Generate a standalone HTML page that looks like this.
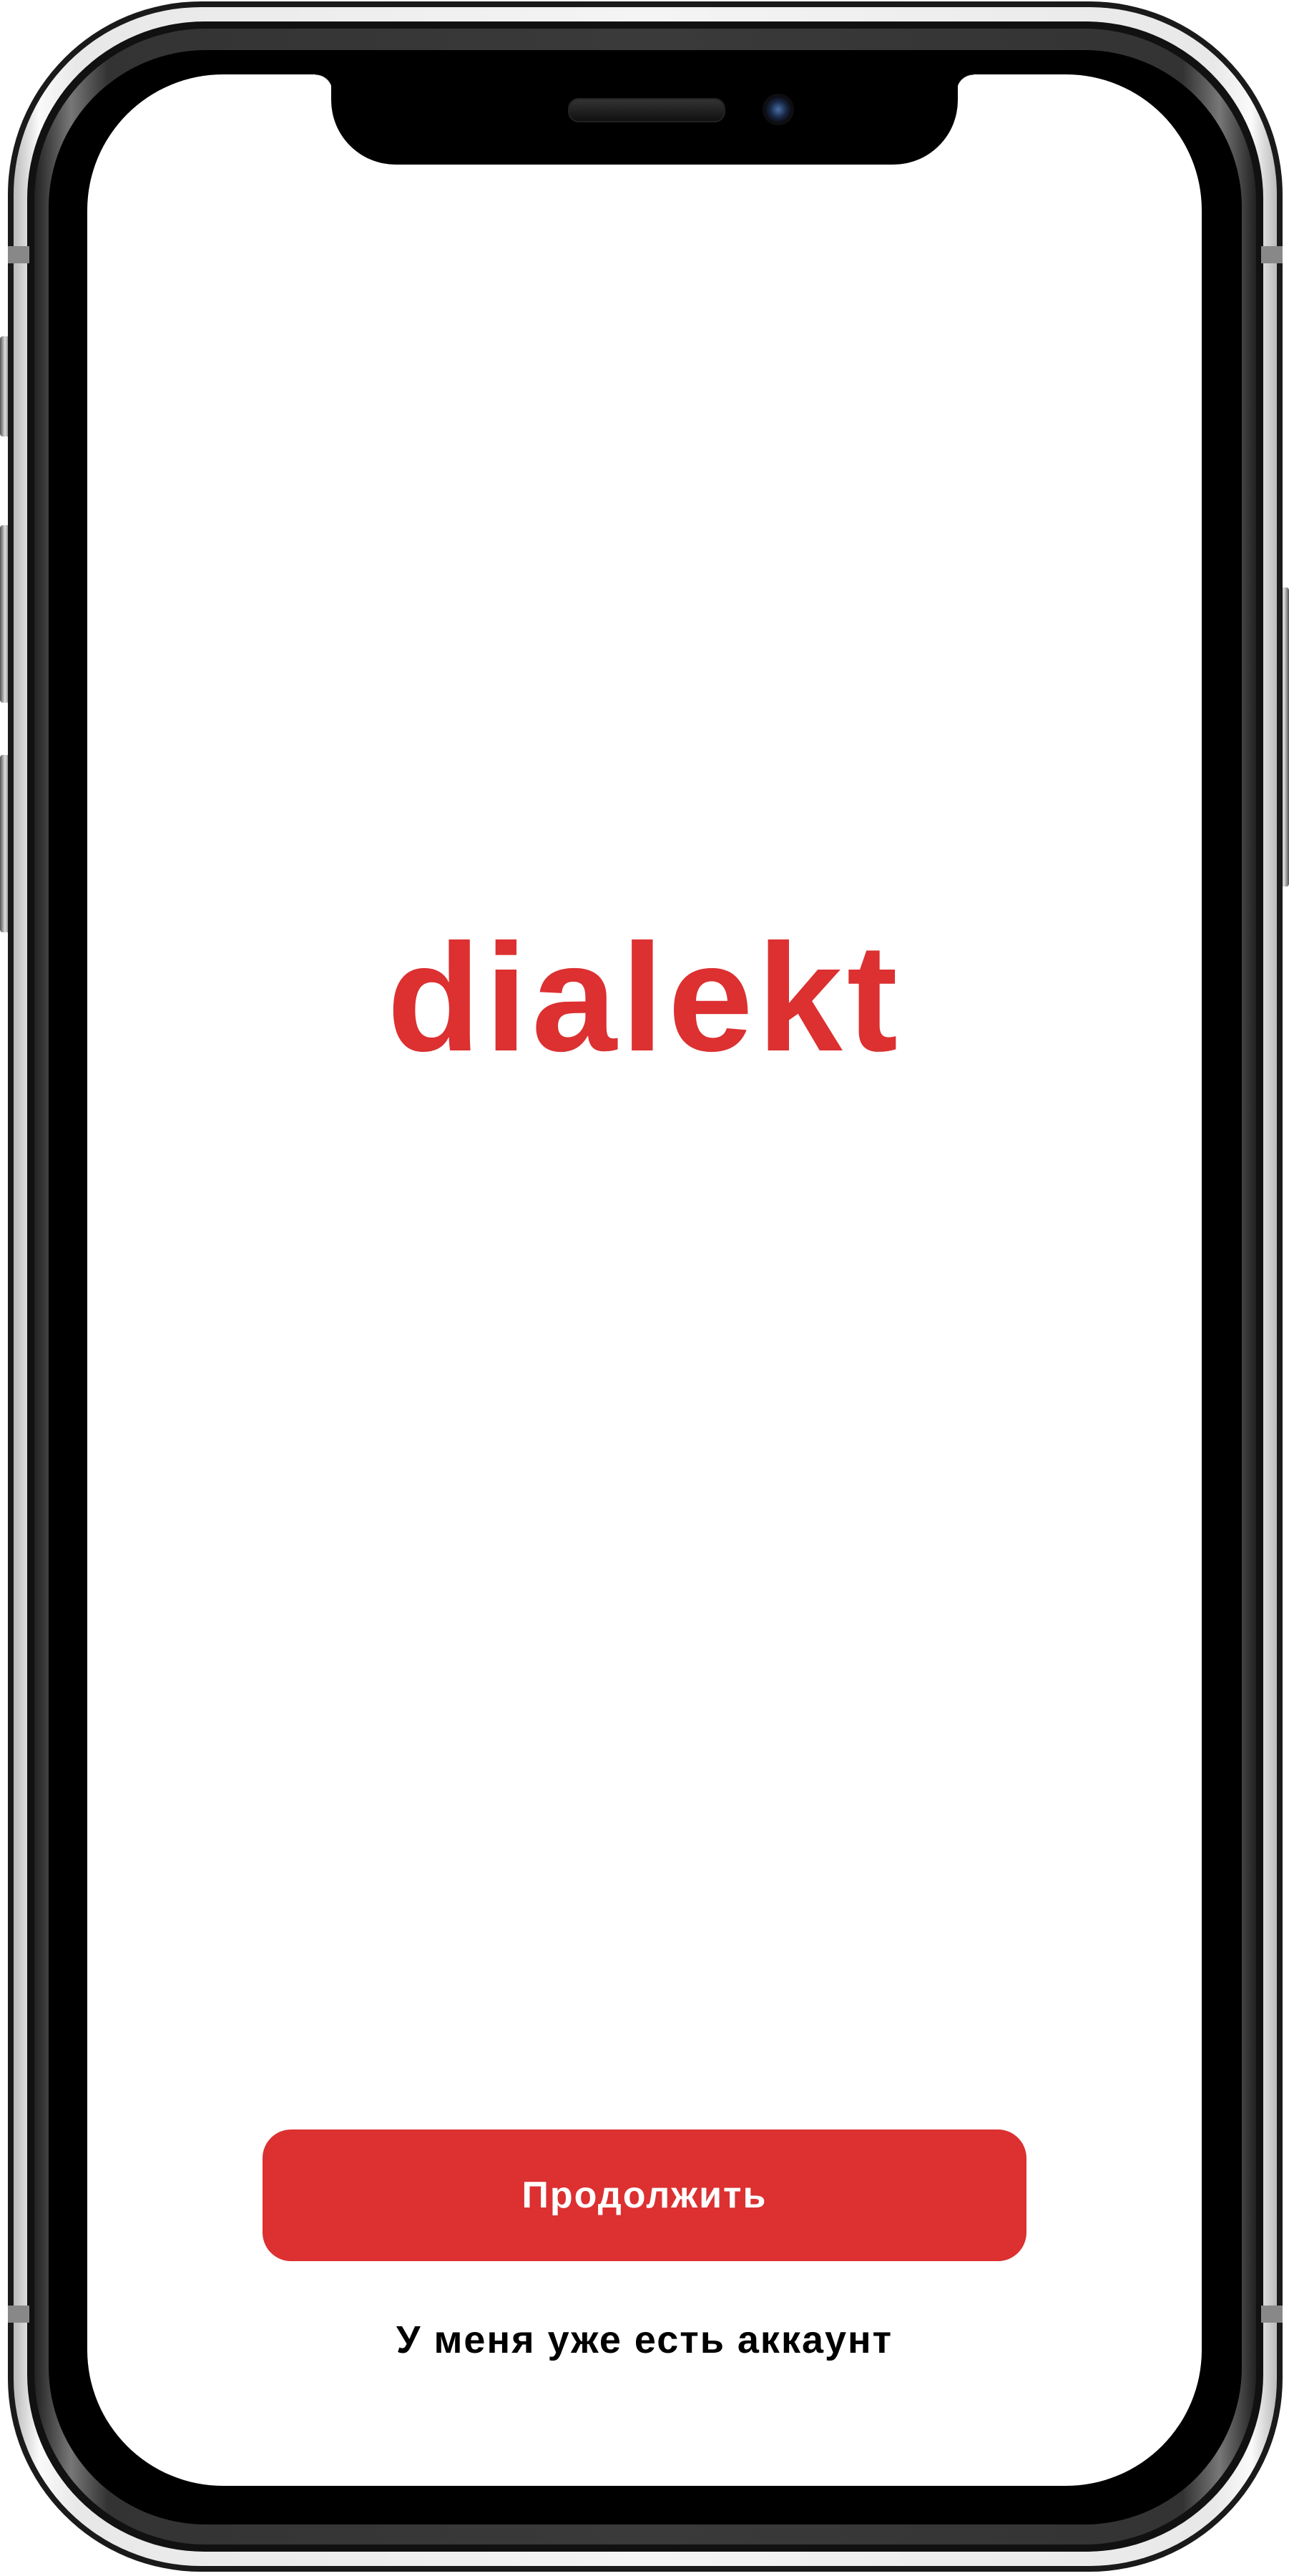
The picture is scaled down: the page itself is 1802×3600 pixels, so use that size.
<!DOCTYPE html>
<html><head><meta charset="utf-8"><style>
html,body{margin:0;padding:0;background:#fff;}
body{width:1802px;height:3600px;position:relative;overflow:hidden;font-family:"Liberation Sans",sans-serif;}
.a{position:absolute;}
</style></head><body>
<div class="a" style="left:0;top:470px;width:14px;height:140px;background:linear-gradient(90deg,#555,#ddd,#777);border-radius:4px"></div>
<div class="a" style="left:0;top:734px;width:14px;height:248px;background:linear-gradient(90deg,#555,#ddd,#777);border-radius:4px"></div>
<div class="a" style="left:0;top:1055px;width:14px;height:248px;background:linear-gradient(90deg,#555,#ddd,#777);border-radius:4px"></div>
<div class="a" style="right:0;top:821px;width:14px;height:418px;background:linear-gradient(90deg,#777,#ddd,#555);border-radius:4px"></div>
<div class="a" style="left:11px;top:2px;width:1782px;height:3592px;border-radius:270px;background:#1a1a1a"></div>
<div class="a" style="left:19px;top:10px;width:1766px;height:3576px;border-radius:262px;background:linear-gradient(90deg,#bbb 0%,#fafafa 2%,#e8e8e8 5%,#f4f4f4 50%,#e8e8e8 95%,#fafafa 98%,#bbb 100%)"></div>
<div class="a" style="left:38px;top:30px;width:1728px;height:3536px;border-radius:248px;background:#111"></div>
<div class="a" style="left:48px;top:40px;width:1708px;height:3516px;border-radius:240px;background:linear-gradient(90deg,#222 0%,#777 3%,#333 6%,#3a3a3a 50%,#333 94%,#777 97%,#222 100%)"></div>
<div class="a" style="left:68px;top:70px;width:1668px;height:3458px;border-radius:220px;background:#000"></div>
<div class="a" style="left:11px;top:344px;width:30px;height:24px;background:#888"></div>
<div class="a" style="right:9px;top:344px;width:30px;height:24px;background:#888"></div>
<div class="a" style="left:11px;top:3222px;width:30px;height:24px;background:#888"></div>
<div class="a" style="right:9px;top:3222px;width:30px;height:24px;background:#888"></div>
<div class="a" style="left:122px;top:104px;width:1558px;height:3370px;border-radius:190px;background:#fff;overflow:hidden">
  <div class="a" style="left:341px;top:0;width:876px;height:126px;background:#000;border-radius:0 0 90px 90px"></div>
  <div class="a" style="left:319px;top:0;width:24px;height:24px;background:radial-gradient(circle at 0 100%,transparent 23px,#000 24px)"></div>
  <div class="a" style="left:1215px;top:0;width:24px;height:24px;background:radial-gradient(circle at 100% 100%,transparent 23px,#000 24px)"></div>
</div>
<div class="a" style="left:794px;top:137px;width:216px;height:30px;border-radius:15px;background:linear-gradient(#333,#111);border:2px solid #222"></div>
<div class="a" style="left:1066px;top:131px;width:44px;height:44px;border-radius:50%;background:radial-gradient(circle,#4a6fa8 0,#1a2a48 35%,#0c0c12 60%,#1a1a1a 100%)"></div>
<div class="a" style="left:0;width:1802px;top:1270px;text-align:center;color:#DC3031;font-weight:bold;font-size:214px;line-height:250px;letter-spacing:6px">dialekt</div>
<div class="a" style="left:367px;top:2976px;width:1068px;height:184px;border-radius:40px;background:#DC3031;color:#fff;font-weight:bold;font-size:52px;line-height:184px;text-align:center;letter-spacing:2px">Продолжить</div>
<div class="a" style="left:0;width:1802px;top:3238px;text-align:center;color:#000;font-weight:bold;font-size:54px;line-height:64px;letter-spacing:2px">У меня уже есть аккаунт</div>
</body></html>
